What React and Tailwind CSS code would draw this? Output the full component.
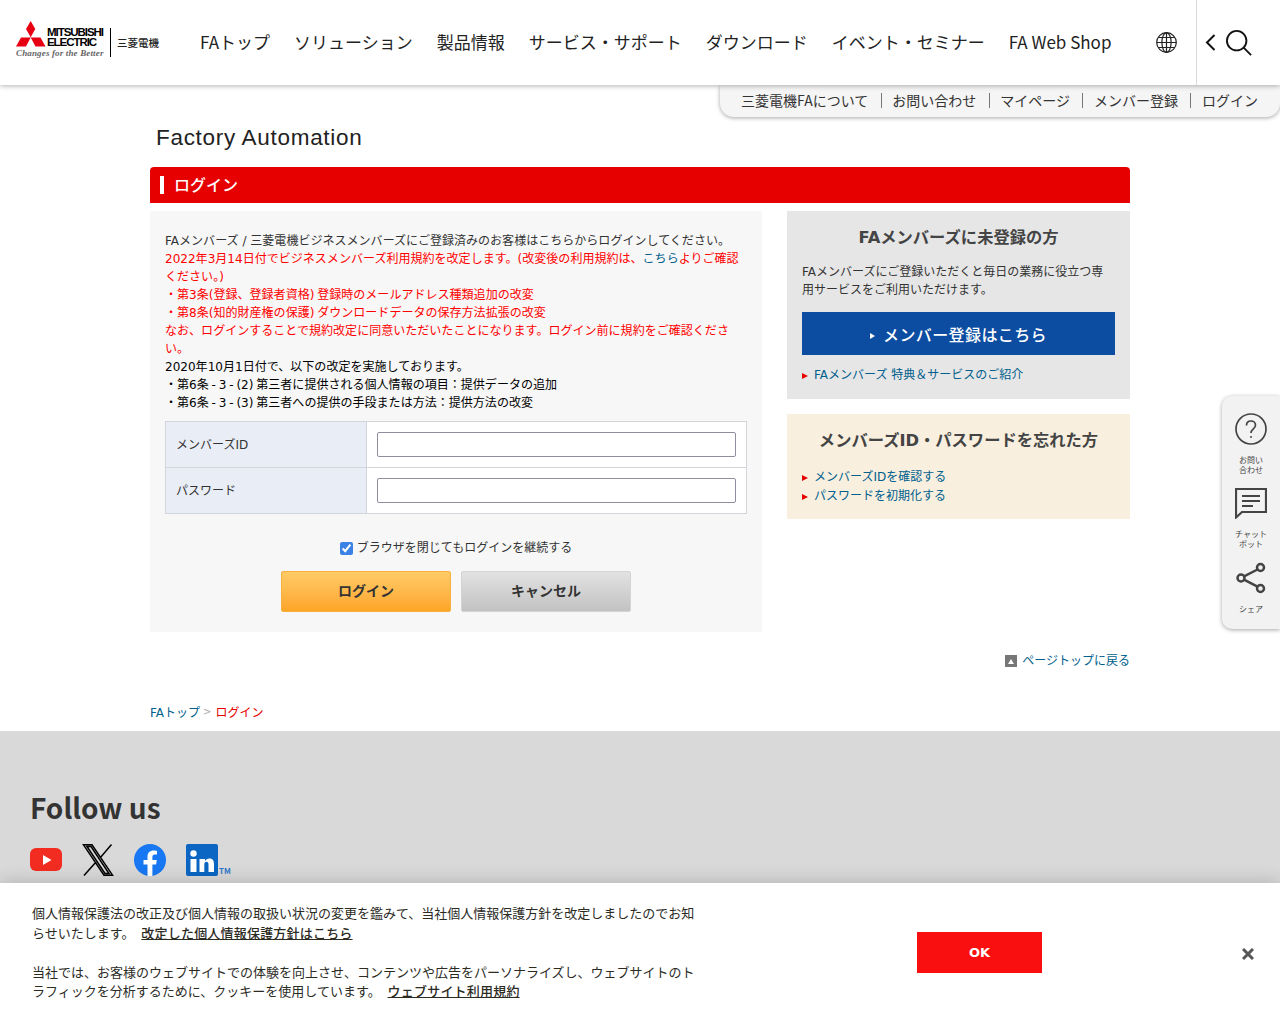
import React from 'react';

const NAV = ['FAトップ', 'ソリューション', '製品情報', 'サービス・サポート', 'ダウンロード', 'イベント・セミナー', 'FA Web Shop'];
const SUB = ['三菱電機FAについて', 'お問い合わせ', 'マイページ', 'メンバー登録', 'ログイン'];
const jp = { fontFamily: '"Noto Sans CJK JP", "Noto Sans", sans-serif' };
const body = { fontFamily: '"DejaVu Sans", "Noto Sans CJK JP", sans-serif' };

function Logo() {
  return (
    <div className="flex items-center w-[143px] h-[36px] mt-[-7px]">
      <div className="relative w-[94px] h-[36px] shrink-0">
        <svg width="30" height="26" viewBox="0 0 30 26" className="absolute left-0 top-0">
          <path d="M14.700 0l4.600 8-4.600 8.300L10 8zM14.700 16.500H5L0 25.500h10zM14.700 16.500h9.800l5 9H19.500z" fill="#e60012" />
        </svg>
        <div className="absolute left-[31px] top-[7px] text-[11.500px] leading-[9.500px] font-bold text-black tracking-[-1.05px]" style={{ fontFamily: '"Liberation Sans", sans-serif' }}>
          MITSUBISHI<br />ELECTRIC
        </div>
        <div className="absolute left-0 top-[27px] text-[9px] leading-[10px] italic font-bold text-[#666] whitespace-nowrap tracking-[0.15px]" style={{ fontFamily: '"Liberation Serif", serif' }}>
          Changes for the Better
        </div>
      </div>
      <div className="w-px h-[29px] bg-black mr-[6px] mt-[7px] shrink-0"></div>
      <span className="text-[10.500px] font-medium text-[#222] whitespace-nowrap mt-[7px]">三菱電機</span>
    </div>
  );
}

function Arrow({ text }) {
  return (
    <a className="flex items-center text-[12px] leading-[19px] text-[#00608d]">
      <span className="w-0 h-0 border-y-[3px] border-y-transparent border-l-[6px] border-l-[#e60000] mr-[6px]"></span>
      {text}
    </a>
  );
}

function SideItem({ icon, lines }) {
  return (
    <div className="flex flex-col items-center">
      {icon}
      <div className="text-[8px] leading-[10px] text-[#444] text-center mt-[10px]">
        {lines.map((l) => <div key={l}>{l}</div>)}
      </div>
    </div>
  );
}

export default function App() {
  return (
    <div className="relative w-[1280px] h-[1024px] overflow-hidden bg-white text-[#222]" style={jp}>

      {/* header */}
      <header className="relative z-20 h-[85px] bg-white shadow-[0_1px_5px_rgba(0,0,0,0.3)] flex items-center pl-[16px]">
        <Logo />
        <nav className="flex ml-[41px] mb-[2px] gap-[24px] text-[17px] text-[#222] whitespace-nowrap">
          {NAV.map((n) => <span key={n}>{n}</span>)}
        </nav>
        <svg width="21" height="21" viewBox="0 0 21 21" fill="none" stroke="#222" strokeWidth="1.200" className="ml-[45px]">
          <circle cx="10.500" cy="10.500" r="9.800" />
          <ellipse cx="10.500" cy="10.500" rx="4.600" ry="9.800" />
          <path d="M10.500 .7v19.600M.7 10.500h19.600M2.200 5.500h16.600M2.200 15.500h16.600" />
        </svg>
        <div className="ml-[19px] h-[85px] border-l border-[#d9d9d9] flex items-center pl-[8px]">
          <svg width="11" height="17" viewBox="0 0 11 17" fill="none" stroke="#111" strokeWidth="2">
            <path d="M9.500 1 2 8.500 9.500 16" />
          </svg>
          <svg width="26" height="26" viewBox="0 0 28 28" fill="none" stroke="#111" strokeWidth="2" className="ml-[10px] mt-[1px]">
            <circle cx="11.500" cy="11.500" r="10.500" />
            <path d="m19 19 8 8" />
          </svg>
        </div>
      </header>

      {/* sub nav */}
      <div className="absolute z-10 left-[720px] top-[85px] w-[560px] h-[32px] bg-[#f5f5f5] rounded-bl-[14px] rounded-br-[14px] shadow-[0_1px_4px_rgba(0,0,0,0.35)] flex items-center pl-[10.500px] pb-[1px] text-[14px] text-[#333]">
        {SUB.map((s, i) => (
          <span key={s} className={i === 0 ? 'pl-[10.500px] pr-[12.500px]' : 'pl-[10.500px] pr-[12.500px] border-l border-[#777] leading-[15px]'}>{s}</span>
        ))}
      </div>

      <main className="w-[980px] mx-auto" style={body}>
        <div className="pt-[38px] pl-[6px] h-[82px] text-[22.500px] leading-[30px] text-[#222] tracking-[0.7px]" style={{ fontFamily: '"Liberation Sans", sans-serif' }}>
          Factory Automation
        </div>

        <h1 className="h-[36px] bg-[#e60000] rounded-t-[4px] flex items-center pl-[10px] pb-[2px] text-white text-[16px] font-medium" style={jp}>
          <span className="w-[4px] h-[18px] bg-white mr-[10px] mt-[2px]"></span>ログイン
        </h1>

        <div className="flex justify-between mt-[8px]">
          {/* left column */}
          <section className="w-[612px] h-[421px] bg-[#f7f7f7] px-[15px] pt-[21px]">
            <div className="text-[12.040px] leading-[18px] text-black">
              <p className="text-[#333]">FAメンバーズ / 三菱電機ビジネスメンバーズにご登録済みのお客様はこちらからログインしてください。</p>
              <div className="text-[#f00]">
                <p>2022年3月14日付でビジネスメンバーズ利用規約を改定します。(改変後の利用規約は、<span className="text-[#00608d]">こちら</span>よりご確認ください。)</p>
                <p className="[word-spacing:-1px]">・第3条(登録、登録者資格) 登録時のメールアドレス種類追加の改変</p>
                <p className="[word-spacing:-1px]">・第8条(知的財産権の保護) ダウンロードデータの保存方法拡張の改変</p>
                <p>なお、ログインすることで規約改定に同意いただいたことになります。ログイン前に規約をご確認ください。</p>
              </div>
              <p>2020年10月1日付で、以下の改定を実施しております。</p>
              <p className="[word-spacing:-1px]">・第6条 - 3 - (2) 第三者に提供される個人情報の項目：提供データの追加</p>
              <p className="[word-spacing:-1px]">・第6条 - 3 - (3) 第三者への提供の手段または方法：提供方法の改変</p>
            </div>

            <div className="mt-[9px] border border-[#d2d5da] bg-white text-[12px] text-[#333]">
              {['メンバーズID', 'パスワード'].map((label, i) => (
                <div key={label} className={i === 0 ? 'flex h-[46px] border-b border-[#d2d5da]' : 'flex h-[45px]'}>
                  <div className="w-[201px] bg-[#e9edf5] border-r border-[#d2d5da] flex items-center pl-[10px]">{label}</div>
                  <div className="flex-1 flex items-center px-[10px]">
                    <input type={i === 0 ? 'text' : 'password'} className="w-full h-[25px] bg-white border border-[#8e8e9e] rounded-[2px]" />
                  </div>
                </div>
              ))}
            </div>

            <label className="flex items-center justify-center mt-[25px] text-[12px] leading-[18px] text-[#333]">
              <input type="checkbox" defaultChecked className="w-[13px] h-[13px] mr-[4px] accent-[#3b82e6]" />
              ブラウザを閉じてもログインを継続する
            </label>

            <div className="flex justify-center gap-[10px] mt-[14px]">
              <button className="w-[170px] h-[41px] rounded-[2px] border border-[#f5b040] bg-gradient-to-b from-[#ffcb66] to-[#fda526] text-[14px] font-bold text-[#333]">ログイン</button>
              <button className="w-[170px] h-[41px] rounded-[2px] border border-[#d4d4d4] bg-gradient-to-b from-[#e2e2e2] to-[#c2c2c2] text-[14px] font-bold text-[#333]">キャンセル</button>
            </div>
          </section>

          {/* right column */}
          <aside className="w-[343px]">
            <div className="h-[188px] bg-[#e6e6e6] px-[15px] pt-[16px]">
              <h2 className="text-[16.300px] leading-[22px] font-bold text-[#444] text-center">FAメンバーズに未登録の方</h2>
              <p className="mt-[14px] text-[12px] leading-[18px] text-[#333]">FAメンバーズにご登録いただくと毎日の業務に役立つ専用サービスをご利用いただけます。</p>
              <a className="mt-[13px] h-[43px] bg-[#0c4da2] flex items-center justify-center pt-[4px] text-white text-[16px] font-medium tracking-[0.4px]">
                <span className="w-0 h-0 border-y-[3px] border-y-transparent border-l-[5px] border-l-white mr-[8px]"></span>
                メンバー登録はこちら
              </a>
              <div className="mt-[11px]"><Arrow text="FAメンバーズ 特典＆サービスのご紹介" /></div>
            </div>
            <div className="mt-[15px] h-[105px] bg-[#f8efdf] px-[15px] pt-[16px]">
              <h2 className="text-[16.300px] leading-[22px] font-bold text-[#444] text-center">メンバーズID・パスワードを忘れた方</h2>
              <div className="mt-[16px]">
                <Arrow text="メンバーズIDを確認する" />
                <Arrow text="パスワードを初期化する" />
              </div>
            </div>
          </aside>
        </div>

        {/* page top */}
        <div className="flex justify-end items-center mt-[19px] h-[20px] text-[12px] text-[#00608d]">
          <span className="w-[12px] h-[12px] bg-[#777] flex items-center justify-center mr-[5px]">
            <span className="w-0 h-0 border-x-[3px] border-x-transparent border-b-[5px] border-b-white"></span>
          </span>
          ページトップに戻る
        </div>

        {/* breadcrumb */}
        <div className="flex items-center mt-[32px] h-[20px] text-[12px]">
          <span className="text-[#00608d]">FAトップ</span>
          <span className="text-[#aaa] ml-[3px] mr-[4px] text-[10px] -mt-[3px]">&gt;</span>
          <span className="text-[#e60000]">ログイン</span>
        </div>
      </main>

      {/* footer */}
      <footer className="mt-[8px] h-[300px] bg-[#d9d9d9] pl-[30px] pt-[56px]">
        <div className="text-[28px] leading-[40px] font-bold text-[#333]">Follow us</div>
        <div className="flex items-start gap-[20px] mt-[17px]">
          <svg width="32" height="32" viewBox="0 0 32 32">
            <rect x="0" y="4" width="32" height="23" rx="6" fill="#f22c20" />
            <path d="M13 11v10l8.500-5z" fill="#fff" />
          </svg>
          <svg width="32" height="32" viewBox="0 0 32 32">
            <path d="M1.500 .8h8.500L30.500 31.200H22zM5 2.500l18 27h4L9 2.500zM29.500.5 18 14M14 18 2 31.500" fill="none" stroke="#000" strokeWidth="1.500" />
          </svg>
          <svg width="32" height="32" viewBox="0 0 32 32">
            <circle cx="16" cy="16" r="16" fill="#1877f2" />
            <path d="M13.500 32V20.500H9.500V16h4v-3.400c0-4 2.400-6.200 6-6.200 1.700 0 3.500.3 3.500.3v3.900h-2c-2 0-2.600 1.200-2.600 2.500v2.900h4.400l-.7 4.500h-3.700V32z" fill="#fff" />
          </svg>
          <div className="flex items-end">
            <svg width="32" height="32" viewBox="0 0 32 32">
              <rect width="32" height="32" rx="2" fill="#0a66c2" />
              <circle cx="7.500" cy="9.500" r="3.200" fill="#fff" />
              <path d="M4.500 15h6v13h-6zM13.500 15h5.500v2c1-1.500 2.500-2.400 4.400-2.400 3.800 0 4.600 2.600 4.600 6V28h-5.500v-7.500c0-1.800-.6-2.800-2-2.800-1.600 0-2.200 1.100-2.200 2.800V28h-4.800z" fill="#fff" />
            </svg>
            <span className="text-[8px] leading-[10px] text-[#2f78c8] ml-[1px] font-bold">TM</span>
          </div>
        </div>
      </footer>

      {/* side panel */}
      <div className="absolute z-10 left-[1222px] top-[396px] w-[58px] h-[233px] bg-[#f2f2f2] rounded-l-[10px] shadow-[0_1px_4px_rgba(0,0,0,0.35)] flex flex-col items-center pt-[17px] gap-[13px]">
        <SideItem
          lines={['お問い', '合わせ']}
          icon={
            <svg width="32" height="32" viewBox="0 0 32 32" fill="none" stroke="#444" strokeWidth="1.700">
              <circle cx="16" cy="16" r="15" />
              <path d="M11.500 12.500c0-2.800 2-4.500 4.500-4.500s4.500 1.700 4.500 4.200c0 3.600-4.500 3.800-4.500 7.800" />
              <circle cx="16" cy="24" r="1" fill="#444" stroke="none" />
            </svg>
          }
        />
        <SideItem
          lines={['チャット', 'ボット']}
          icon={
            <svg width="32" height="31" viewBox="0 0 32 31" fill="none" stroke="#444" strokeWidth="2.200">
              <path d="M1 1h30v23H7l-6 5.500z" />
              <path d="M7 8h18M7 13h18M7 18h11" />
            </svg>
          }
        />
        <SideItem
          lines={['シェア']}
          icon={
            <svg width="30" height="32" viewBox="0 0 30 32" fill="none" stroke="#444" strokeWidth="2.500">
              <circle cx="24.500" cy="5.500" r="3.500" />
              <circle cx="24.500" cy="26.500" r="3.500" />
              <circle cx="5" cy="16" r="3.500" />
              <path d="M8 14.300 21.500 7.500M8 17.700l13.500 7" />
            </svg>
          }
        />
      </div>

      {/* cookie banner */}
      <div className="absolute z-30 left-0 bottom-0 w-[1280px] h-[141px] bg-white shadow-[0_0_18px_rgba(0,0,0,0.2)] flex items-start pl-[32px] pt-[20px] text-[13px] leading-[19.500px] text-[#2b2b1f]">
        <div className="w-[668px]">
          <p>個人情報保護法の改正及び個人情報の取扱い状況の変更を鑑みて、当社個人情報保護方針を改定しましたのでお知らせいたします。 <a className="ml-[4px] font-medium underline tracking-[0.2px]">改定した個人情報保護方針はこちら</a></p>
          <p className="mt-[19.500px]">当社では、お客様のウェブサイトでの体験を向上させ、コンテンツや広告をパーソナライズし、ウェブサイトのトラフィックを分析するために、クッキーを使用しています。 <a className="ml-[4px] font-medium underline tracking-[0.2px]">ウェブサイト利用規約</a></p>
        </div>
        <button className="absolute left-[917px] top-[49px] w-[125px] h-[41px] bg-[#f90f0f] text-white text-[13px] font-bold" style={{ fontFamily: '"DejaVu Sans", sans-serif' }}>OK</button>
        <svg width="12" height="12" viewBox="0 0 12 12" fill="none" stroke="#565656" strokeWidth="3" className="absolute left-[1242px] top-[65px]">
          <path d="M1 1l10 10M11 1 1 11" />
        </svg>
      </div>
    </div>
  );
}
